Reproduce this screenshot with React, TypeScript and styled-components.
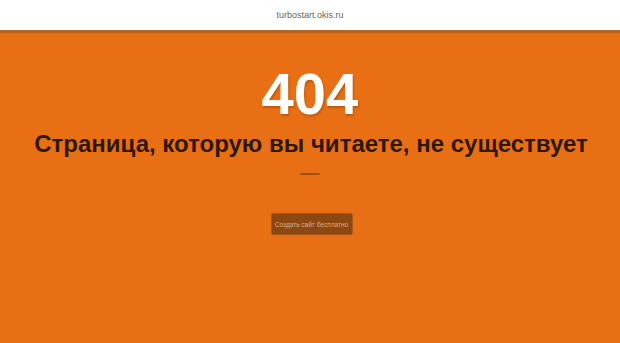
import React from "react";
import styled, { createGlobalStyle } from "styled-components";

const GlobalStyle = createGlobalStyle`
  html, body {
    margin: 0;
    padding: 0;
    height: 100%;
  }
  body {
    background: #e86f14;
    font-family: "Liberation Sans", Arial, sans-serif;
    overflow: hidden;
  }
`;

const Page = styled.div`
  display: flex;
  flex-direction: column;
  width: 100%;
  min-height: 343px;
  background: #e86f14;
`;

const TopBar = styled.header`
  display: flex;
  align-items: center;
  justify-content: center;
  height: 30px;
  background: #ffffff;
  border-bottom: 3px solid #b5611f;
  font-size: 9px;
  color: #666666;
`;

const Content = styled.main`
  display: flex;
  flex-direction: column;
  align-items: center;
  padding-top: 32px;
`;

const Code = styled.h1`
  margin: 0;
  font-size: 58px;
  line-height: 58px;
  font-weight: 700;
  color: #ffffff;
  text-shadow: 1px 2px 2px rgba(120, 50, 0, 0.35);
`;

const Title = styled.h2`
  margin: 6px 0 0 2px;
  font-size: 24px;
  line-height: 30px;
  font-weight: 700;
  color: #2f1906;
  white-space: nowrap;
`;

const Divider = styled.div`
  width: 20px;
  height: 2px;
  margin-top: 14px;
  background: #9a5220;
  border-radius: 1px;
`;

const Button = styled.a`
  display: flex;
  align-items: center;
  justify-content: center;
  margin: 38px 0 0 3px;
  width: 82px;
  height: 22px;
  box-sizing: border-box;
  background: #8c4712;
  border: 1px solid #a85a1c;
  border-radius: 2px;
  color: #dcb07e;
  font-size: 6.5px;
  text-decoration: none;
`;

export default function App() {
  return (
    <>
      <GlobalStyle />
      <Page>
        <TopBar>turbostart.okis.ru</TopBar>
        <Content>
          <Code>404</Code>
          <Title>Страница, которую вы читаете, не существует</Title>
          <Divider />
          <Button href="#">Создать сайт бесплатно</Button>
        </Content>
      </Page>
    </>
  );
}
